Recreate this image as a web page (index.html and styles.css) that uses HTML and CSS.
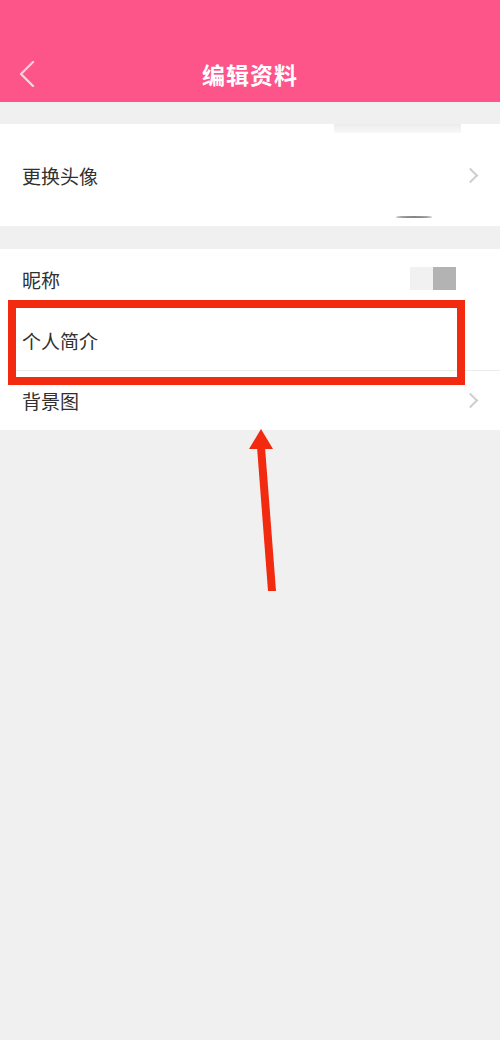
FILE: index.html
```html
<!DOCTYPE html>
<html lang="zh-CN">
<head>
    <meta charset="UTF-8">
    <meta name="viewport" content="width=device-width, initial-scale=1.0">
    <title>编辑资料</title>
    <link rel="stylesheet" href="styles.css">
</head>
<body>
    <div class="topbar">
        <div class="back">
            <svg width="18" height="26" viewBox="0 0 18 26"><path d="M15 1 L3 13 L15 25" fill="none" stroke="#f7d3de" stroke-width="2.4" stroke-linecap="round" stroke-linejoin="round"/></svg>
        </div>
        <h1>编辑资料</h1>
        <div class="back-spacer"></div>
    </div>

    <!-- 头像 -->
    <div class="group">
        <div class="row row-avatar">
            <span class="label">更换头像</span>
            <span class="smudge-top"></span>
            <span class="smudge-bottom"></span>
            <span class="arrow-right"></span>
        </div>
    </div>

    <!-- 资料 -->
    <div class="group">
        <div class="row">
            <span class="label">昵称</span>
            <span class="nick-box"><i></i><b></b></span>
        </div>
        <div class="row">
            <span class="label">个人简介</span>
        </div>
        <div class="row line">
            <span class="label">背景图</span>
            <span class="arrow-right"></span>
        </div>
    </div>

    <!-- 标注 -->
    <div class="mark-box"></div>
    <svg class="mark-arrow" width="50" height="170" viewBox="0 0 50 170">
        <polygon points="21,0 33,20 9,20" fill="#f12a10"/>
        <polygon points="17,18 25,18 36,162 28,162" fill="#f12a10"/>
    </svg>
</body>
</html>
```

FILE: styles.css
```css
:root {
    --pink: #fd5489;
    --bg: #f0f0f0;
    --text: #303030;
    --line: #ececec;
    --mark: #f12a10;
}

* {
    margin: 0;
    padding: 0;
    box-sizing: border-box;
}

body {
    background-color: var(--bg);
    font-family: "Noto Sans CJK SC", "Noto Sans", sans-serif;
    color: var(--text);
    width: 500px;
    min-height: 1040px;
    position: relative;
}

.topbar {
    background-color: var(--pink);
    height: 102px;
    padding: 46px 16px 0 16px;
    display: flex;
    align-items: center;
    justify-content: space-between;
}

.topbar > * {
    height: 52px;
    display: flex;
    align-items: center;
}

.back, .back-spacer {
    width: 40px;
}

.back {
    padding-left: 2px;
}

.topbar h1 {
    color: #fff;
    font-size: 23px;
    font-weight: bold;
    letter-spacing: 1px;
}

.group {
    background-color: #fff;
    margin-top: 22px;
}

.group + .group {
    margin-top: 23px;
}

.row {
    height: 60px;
    display: flex;
    align-items: center;
    justify-content: space-between;
    padding: 0 22px;
    position: relative;
}

.row:first-child {
    height: 61px;
}

.row-avatar,
.row-avatar:first-child {
    height: 102px;
}

.row.line::before {
    content: '';
    position: absolute;
    top: 0;
    left: 15px;
    right: 0;
    height: 1px;
    background: var(--line);
}

.label {
    font-size: 19px;
    line-height: 1;
}

.arrow-right {
    width: 11px;
    height: 11px;
    border-top: 2px solid #cfcfcf;
    border-right: 2px solid #cfcfcf;
    transform: rotate(45deg);
    margin-right: 2px;
}

.smudge-top {
    position: absolute;
    left: 334px;
    top: 0;
    width: 127px;
    height: 9px;
    background: linear-gradient(#ececec, #f8f8f8);
}

.smudge-bottom {
    position: absolute;
    left: 396px;
    bottom: 8px;
    width: 36px;
    height: 2px;
    border-radius: 50%;
    background: #555;
    opacity: 0.7;
}

.nick-box {
    display: flex;
    margin-right: 22px;
    margin-top: -2px;
}

.nick-box i {
    width: 23px;
    height: 23px;
    background: #f1f1f1;
}

.nick-box b {
    width: 23px;
    height: 23px;
    background: #b3b3b3;
}

.mark-box {
    position: absolute;
    left: 8px;
    top: 300px;
    width: 457px;
    height: 85px;
    border: 8px solid var(--mark);
}

.mark-arrow {
    position: absolute;
    left: 240px;
    top: 429px;
}
```
